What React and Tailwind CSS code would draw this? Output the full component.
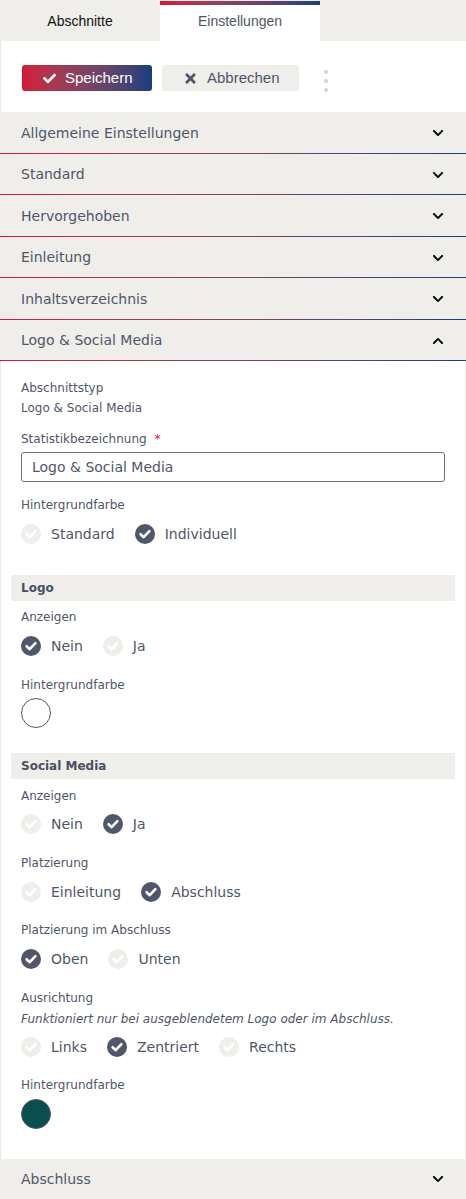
import React from 'react';
import { FaCheck, FaTimes, FaChevronDown, FaChevronUp } from 'react-icons/fa';

const Check = ({ on }) => (
  <svg width="20" height="20" viewBox="0 0 20 20" className="shrink-0">
    <circle cx="10" cy="10" r="10" fill={on ? '#51566a' : '#efeeeb'} />
    <path d="M5.6 10.2 L8.7 13.2 L14.4 7.2" fill="none" stroke="#fff" strokeWidth="2.6" strokeLinecap="round" strokeLinejoin="round" />
  </svg>
);

const Radios = ({ items, className = '' }) => (
  <div className={`flex items-center gap-[10px] h-6 ${className}`}>
    {items.map(([label, on]) => (
      <div key={label} className="flex items-center gap-[10px] mr-[10px]">
        <Check on={on} />
        <span className="text-[14px] text-[#50566a]">{label}</span>
      </div>
    ))}
  </div>
);

const Label = ({ children, className = '' }) => (
  <div className={`text-[12px] leading-5 text-[#50566a] ${className}`}>{children}</div>
);

const AccRow = ({ title, open }) => (
  <div className="bg-[#efeeeb]">
    <div className="h-[40.5px] flex items-center justify-between pl-[21px] pr-[22px] pt-[2px]">
      <span className="text-[14px] text-[#50566a]">{title}</span>
      {open ? <FaChevronUp className="text-[12px] text-black" /> : <FaChevronDown className="text-[12px] text-black" />}
    </div>
    <div className="h-px bg-gradient-to-r from-[#d3163a] to-[#173d7d]" />
  </div>
);

const SubHead = ({ children, className = '' }) => (
  <div className={`mx-[10px] h-[26px] bg-[#efeeeb] flex items-center px-[10px] text-[12px] font-bold text-[#4a5064] ${className}`}>
    {children}
  </div>
);

export default function App() {
  return (
    <div className="w-[466px] min-h-[1199px] bg-white font-['DejaVu_Sans',sans-serif]">
      {/* tabs */}
      <div className="h-[41px] bg-[#efeeeb] flex items-end font-['Liberation_Sans',Arial,sans-serif] text-[14px]">
        <div className="w-[160px] h-10 flex items-center justify-center text-[#111]">Abschnitte</div>
        <div className="w-[160px] h-10 bg-white flex flex-col">
          <div className="h-1 bg-gradient-to-r from-[#d3163a] to-[#173d7d]" />
          <div className="flex-1 flex items-center justify-center text-[#50566a] pb-1">Einstellungen</div>
        </div>
      </div>

      {/* actions */}
      <div className="border-l border-[#e9e7e4] h-[71px] flex items-start pt-6 pl-[21px] gap-[10px] font-['Liberation_Sans',Arial,sans-serif] text-[15px]">
        <button className="w-[130px] h-[26px] rounded-[3px] bg-gradient-to-r from-[#d3163a] to-[#173d7d] text-white flex items-center pl-[21px] gap-[9px]">
          <FaCheck className="text-[13px]" />
          <span>Speichern</span>
        </button>
        <button className="w-[137px] h-[26px] rounded-[3px] bg-[#efeeeb] text-[#50566a] flex items-center pl-[21px] gap-[9px]">
          <FaTimes className="text-[15px]" />
          <span>Abbrechen</span>
        </button>
        <div className="ml-[15px] mt-[5px] flex flex-col gap-[5px]">
          <span className="w-1 h-1 rounded-full bg-[#d4d4d4]" />
          <span className="w-1 h-1 rounded-full bg-[#d4d4d4]" />
          <span className="w-1 h-1 rounded-full bg-[#d4d4d4]" />
        </div>
      </div>

      <AccRow title="Allgemeine Einstellungen" />
      <AccRow title="Standard" />
      <AccRow title="Hervorgehoben" />
      <AccRow title="Einleitung" />
      <AccRow title="Inhaltsverzeichnis" />
      <AccRow title="Logo & Social Media" open />

      {/* expanded panel */}
      <div className="border-x border-[#e9e7e4] pt-[17px] pb-[30px]">
        <div className="px-5">
          <Label>Abschnittstyp</Label>
          <Label>Logo &amp; Social Media</Label>
          <Label className="mt-[11px]">
            Statistikbezeichnung <span className="text-[#d3163a] ml-1">*</span>
          </Label>
          <div className="mt-[3px] h-[30px] border border-[#6b6f7c] rounded-[3px] flex items-center px-[10px] text-[14px] text-[#50566a]">
            Logo &amp; Social Media
          </div>
          <Label className="mt-[13px]">Hintergrundfarbe</Label>
          <Radios className="mt-[7px]" items={[['Standard', false], ['Individuell', true]]} />
        </div>

        <SubHead className="mt-[29px]">Logo</SubHead>
        <div className="px-5">
          <Label className="mt-[6px]">Anzeigen</Label>
          <Radios className="mt-[7px]" items={[['Nein', true], ['Ja', false]]} />
          <Label className="mt-[17px]">Hintergrundfarbe</Label>
          <div className="mt-[3px] w-[30px] h-[30px] rounded-full border border-[#50566a] bg-white" />
        </div>

        <SubHead className="mt-[25px]">Social Media</SubHead>
        <div className="px-5">
          <Label className="mt-[7px]">Anzeigen</Label>
          <Radios className="mt-[6px]" items={[['Nein', false], ['Ja', true]]} />
          <Label className="mt-[17px]">Platzierung</Label>
          <Radios className="mt-[7px]" items={[['Einleitung', false], ['Abschluss', true]]} />
          <Label className="mt-[16px]">Platzierung im Abschluss</Label>
          <Radios className="mt-[7px]" items={[['Oben', true], ['Unten', false]]} />
          <Label className="mt-[17px]">Ausrichtung</Label>
          <Label className="mt-px italic">Funktioniert nur bei ausgeblendetem Logo oder im Abschluss.</Label>
          <Radios className="mt-[6px]" items={[['Links', false], ['Zentriert', true], ['Rechts', false]]} />
          <Label className="mt-[16px]">Hintergrundfarbe</Label>
          <div className="mt-[4px] w-[30px] h-[30px] rounded-full border border-[#50566a] bg-[#0a4f4f]" />
        </div>
      </div>

      <div className="bg-[#efeeeb] h-10 flex items-center justify-between pl-[21px] pr-[22px]">
        <span className="text-[14px] text-[#50566a]">Abschluss</span>
        <FaChevronDown className="text-[12px] text-black" />
      </div>
    </div>
  );
}
